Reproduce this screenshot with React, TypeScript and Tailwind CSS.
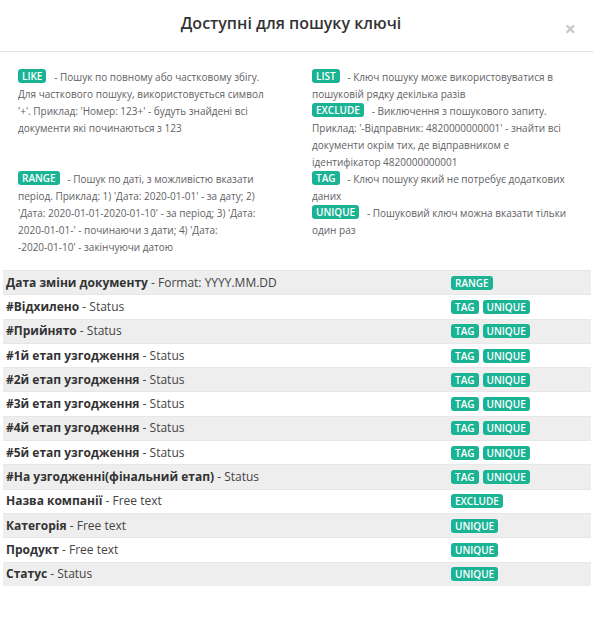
import React from 'react';

const Badge = ({ children }: { children: React.ReactNode }) => (
  <span className="inline-block rounded-[3px] bg-[#1ab394] px-[4px] text-[10px] leading-[14px] font-semibold text-white align-[1px]">
    {children}
  </span>
);

const rows: { key: string; desc: string; tags: string[] }[] = [
  { key: 'Дата зміни документу', desc: 'Format: YYYY.MM.DD', tags: ['RANGE'] },
  { key: '#Відхилено', desc: 'Status', tags: ['TAG', 'UNIQUE'] },
  { key: '#Прийнято', desc: 'Status', tags: ['TAG', 'UNIQUE'] },
  { key: '#1й етап узгодження', desc: 'Status', tags: ['TAG', 'UNIQUE'] },
  { key: '#2й етап узгодження', desc: 'Status', tags: ['TAG', 'UNIQUE'] },
  { key: '#3й етап узгодження', desc: 'Status', tags: ['TAG', 'UNIQUE'] },
  { key: '#4й етап узгодження', desc: 'Status', tags: ['TAG', 'UNIQUE'] },
  { key: '#5й етап узгодження', desc: 'Status', tags: ['TAG', 'UNIQUE'] },
  { key: '#На узгодженні(фінальний етап)', desc: 'Status', tags: ['TAG', 'UNIQUE'] },
  { key: 'Назва компанії', desc: 'Free text', tags: ['EXCLUDE'] },
  { key: 'Категорія', desc: 'Free text', tags: ['UNIQUE'] },
  { key: 'Продукт', desc: 'Free text', tags: ['UNIQUE'] },
  { key: 'Статус', desc: 'Status', tags: ['UNIQUE'] },
];

export default function App() {
  return (
    <div className="w-[594px] h-[624px] bg-white text-[#5f6163] font-['Open_Sans',sans-serif]">
      <div className="relative h-[52px] border-b border-[#e5e5e5] flex items-center justify-center pr-[12px]">
        <h4 className="text-[16px] font-semibold text-[#333] -mt-[6px]">Доступні для пошуку ключі</h4>
        <span className="absolute right-[18px] top-[19px] text-[20px] font-bold text-[#c8c8c8] leading-none">×</span>
      </div>

      <div className="grid grid-cols-[294px_1fr] pl-[18px] pt-[17px] text-[10px] leading-[17px]">
        <div className="pr-[40px]">
          <p>
            <Badge>LIKE</Badge>&nbsp;&nbsp; - Пошук по повному або частковому збігу. Для часткового пошуку, використовується символ
            '+'. Приклад: 'Номер: 123+' - будуть знайдені всі документи які починаються з 123
          </p>
        </div>
        <div className="pr-[20px]">
          <p>
            <Badge>LIST</Badge>&nbsp;&nbsp; - Ключ пошуку може використовуватися в пошуковій рядку декілька разів
          </p>
          <p>
            <Badge>EXCLUDE</Badge>&nbsp;&nbsp; - Виключення з пошукового запиту. Приклад: '-Відправник: 4820000000001' - знайти всі
            документи окрім тих, де відправником е ідентифікатор 4820000000001
          </p>
        </div>
        <div className="pr-[40px]">
          <p>
            <Badge>RANGE</Badge>&nbsp;&nbsp; - Пошук по даті, з можливістю вказати період. Приклад: 1) 'Дата: 2020-01-01' - за дату; 2){' '}
            <span className="whitespace-nowrap">'Дата: 2020-01-01-2020-01-10'</span> - за період; 3) 'Дата:{' '}
            <span className="whitespace-nowrap">2020-01-01-'</span> - починаючи з дати; 4) 'Дата:{' '}
            <span className="whitespace-nowrap">-2020-01-10'</span> - закінчуючи датою
          </p>
        </div>
        <div className="pr-[20px]">
          <p>
            <Badge>TAG</Badge>&nbsp;&nbsp; - Ключ пошуку який не потребує додаткових даних
          </p>
          <p>
            <Badge>UNIQUE</Badge>&nbsp;&nbsp; - Пошуковий ключ можна вказати тільки один раз
          </p>
        </div>
      </div>

      <div className="mx-[3px] mt-[14px] w-[588px] text-[12px]">
        {rows.map((r, i) => (
          <div
            key={i}
            className={`grid grid-cols-[445px_1fr] h-[24.3px] items-center border-t border-[#e7e7e7] ${
              i % 2 === 0 ? 'bg-[#eeeeee]' : 'bg-white'
            }`}
          >
            <div className="pl-[3px] text-[#333] whitespace-nowrap">
              <span className="font-bold">{r.key}</span>
              <span className="text-[#444]"> - {r.desc}</span>
            </div>
            <div className="pl-[3px] flex gap-[4px]">
              {r.tags.map((t) => (
                <Badge key={t}>{t}</Badge>
              ))}
            </div>
          </div>
        ))}
      </div>
    </div>
  );
}
